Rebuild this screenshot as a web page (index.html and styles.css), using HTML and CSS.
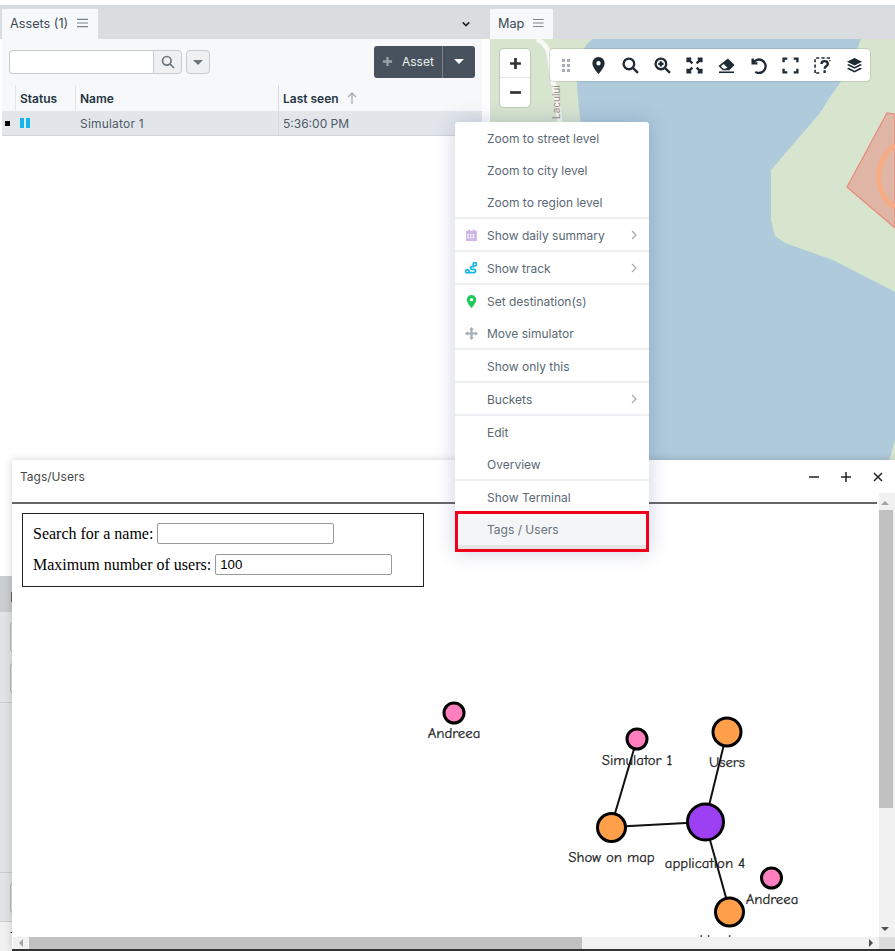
FILE: index.html
```html
<!DOCTYPE html>
<html>

<head>
    <title>Assets and map</title>
    <meta name="viewport" content="width=device-width, initial-scale=1.0">
    <link rel="stylesheet" href="styles.css">
</head>

<body>
    <div class="dock">
        <!-- assets panel -->
        <section class="panel assets">
            <div class="tabbar">
                <div class="tab">
                    <span>Assets (1)</span>
                    <svg class="burger" viewBox="0 0 12 10"><path d="M0 1h12M0 5h12M0 9h12" /></svg>
                </div>
                <svg class="tab-chevron" viewBox="0 0 10 6"><path d="M1 1l4 4 4-4" /></svg>
            </div>
            <div class="toolbar">
                <div class="search">
                    <input type="text">
                    <button class="search-btn">
                        <svg viewBox="0 0 14 14"><circle cx="5.8" cy="5.8" r="4.3" /><path d="M9 9l4 4" /></svg>
                    </button>
                </div>
                <button class="caret-btn"><span class="caret"></span></button>
                <div class="add-asset">
                    <div class="add-main">
                        <svg viewBox="0 0 12 12"><path d="M6 1v10M1 6h10" /></svg>
                        <span>Asset</span>
                    </div>
                    <div class="add-more"><span class="caret"></span></div>
                </div>
            </div>
            <div class="grid-head">
                <div class="col-mark"></div>
                <div class="col-status">Status</div>
                <div class="col-name">Name</div>
                <div class="col-seen">Last seen
                    <svg viewBox="0 0 10 12"><path d="M5 12V1M1 5l4-4 4 4" /></svg>
                </div>
            </div>
            <div class="grid-row">
                <div class="col-mark"><span class="bullet"></span></div>
                <div class="col-status"><span class="pause"></span><span class="pause"></span></div>
                <div class="col-name sim-name">Simulator 1</div>
                <div class="col-seen">5:36:00 PM</div>
            </div>
            <div class="assets-empty"></div>
            <div class="under under-head"><span class="under-mark"></span></div>
            <div class="under under-fields"><span></span><span></span></div>
            <div class="under under-body"></div>
            <div class="under under-fields under-low"><span></span></div>
            <div class="under under-foot">T</div>
        </section>

        <!-- map panel -->
        <section class="panel map">
            <div class="tabbar">
                <div class="tab">
                    <span>Map</span>
                    <svg class="burger" viewBox="0 0 12 10"><path d="M0 1h12M0 5h12M0 9h12" /></svg>
                </div>
            </div>
            <div class="map-view">
                <svg class="map-bg" viewBox="490 39 405 425" preserveAspectRatio="none">
                    <rect x="490" y="39" width="405" height="425" fill="#d7e5cf" />
                    <path d="M593 39H861L855 55L840 83L828 100L820 113L771 170V220L775 236L785 243L833 260L895 292V440L888 464H588C592 400 592 300 590 220C588 170 579 120 577 85C577 60 583 45 593 39Z" fill="#aecadb" />
                    <path d="M895 114L887 113L847 187L895 228Z" fill="#dfb6a6" stroke="#e8897a" stroke-width="1.2" />
                    <path d="M895 145C882 155 877 170 879 182C881 195 888 204 895 207" fill="none" stroke="#f6ab83" stroke-width="5" />
                    <path d="M537 39C546 44 549 50 550 60C552 80 558 100 560 123" fill="none" stroke="#f7f7f4" stroke-width="5" />
                    <text x="0" y="0" transform="translate(560 119) rotate(-90)" class="road">Lacului</text>
                </svg>

                <div class="zoom-ctl">
                    <button>
                        <svg viewBox="0 0 12 12"><path d="M6 1v10M1 6h10" /></svg>
                    </button>
                    <button>
                        <svg viewBox="0 0 12 12"><path d="M1 6h10" /></svg>
                    </button>
                </div>

                <div class="map-tools">
                    <svg class="tool handle" viewBox="0 0 8 13"><rect x="0" y="0" width="3" height="3" /><rect x="5" y="0" width="3" height="3" /><rect x="0" y="5" width="3" height="3" /><rect x="5" y="5" width="3" height="3" /><rect x="0" y="10" width="3" height="3" /><rect x="5" y="10" width="3" height="3" /></svg>
                    <svg class="tool solid" viewBox="0 0 14 18"><path fill-rule="evenodd" d="M7 0a6.5 6.5 0 0 1 6.5 6.5C13.5 11 7 18 7 18S.5 11 .5 6.5A6.5 6.5 0 0 1 7 0zm0 4.300a2.300 2.300 0 1 0 0 4.600 2.300 2.300 0 0 0 0-4.600z" /></svg>
                    <svg class="tool line" viewBox="0 0 16 16"><circle cx="6.5" cy="6.5" r="5" /><path d="M10.200 10.200L15 15" /></svg>
                    <svg class="tool line" viewBox="0 0 16 16"><circle cx="6.5" cy="6.5" r="5" /><path d="M10.200 10.200L15 15M6.5 4v5M4 6.5h5" /></svg>
                    <svg class="tool line" viewBox="0 0 16 16"><path d="M1.5 5V1.5H5M11 1.500h3.500V5M14.500 11v3.500H11M5 14.500H1.500V11M2 2l4 4M14 2l-4 4M14 14l-4-4M2 14l4-4" /></svg>
                    <svg class="tool solid" viewBox="0 0 18 16"><path d="M10.500.5l7 7L12 13H5L.5 8.500z" /><path class="erase-tip" d="M6 6.500l4 4L7.500 11.500H5.700L3 8.700z" /><path d="M1 14.300h16V16H1z" /></svg>
                    <svg class="tool line" viewBox="0 0 16 16"><path d="M2.500 1.500v4.500H7M2.800 5.800A6.300 6.300 0 1 1 5 14" /></svg>
                    <svg class="tool line" viewBox="0 0 16 16"><path d="M1.500 5V1.500H5M11 1.500h3.500V5M14.500 11v3.500H11M5 14.500H1.500V11" /></svg>
                    <svg class="tool dashed" viewBox="0 0 16 16"><path class="dash" d="M1 15V1h14v3M5 15H1" /><path d="M7 6.500c0-3.500 6-3.500 6 0 0 2-3 2-3 4.500M10 12.500v2.500" /></svg>
                    <svg class="tool solid" viewBox="0 0 18 18"><path d="M9 1l8 4-8 4-8-4z" /><path d="M1 8.500l2-1 6 3 6-3 2 1-8 4z" /><path d="M1 12.500l2-1 6 3 6-3 2 1-8 4z" /></svg>
                </div>
            </div>
        </section>
    </div>

    <!-- right click menu on the map -->
    <ul class="context-menu">
        <li class="item">Zoom to street level</li>
        <li class="item">Zoom to city level</li>
        <li class="item last">Zoom to region level</li>
        <li class="item last">
            <svg class="menu-icon" viewBox="0 0 12 12"><path fill="#cdb6e6" fill-rule="evenodd" d="M1 1.500h2V.5h1.500v1h3v-1H9v1h2V11H1zM2 4.500V6h1.500V4.500zm2.500 0V6H6V4.500zm2.500 0V6h1.500V4.500zM2 7v1.500h1.500V7zm2.500 0v1.500H6V7zm2.500 0v1.500h1.500V7z" /></svg>
            Show daily summary
            <svg class="sub" viewBox="0 0 6 10"><path d="M1 1l4 4-4 4" /></svg>
        </li>
        <li class="item last">
            <svg class="menu-icon track" viewBox="0 0 14 14"><circle cx="2.5" cy="10" r="1.800" /><circle cx="10.500" cy="2.500" r="1.800" /><path d="M4.500 11.500h5c2.500 0 2.500-3.500 0-3.500H7.500C5.500 8 5.500 5 7.500 5H10" /></svg>
            Show track
            <svg class="sub" viewBox="0 0 6 10"><path d="M1 1l4 4-4 4" /></svg>
        </li>
        <li class="item">
            <svg class="menu-icon" viewBox="0 0 12 14"><path fill="#1ec95b" fill-rule="evenodd" d="M6 0a5 5 0 0 1 5 5c0 3.500-5 9-5 9S1 8.500 1 5a5 5 0 0 1 5-5zm0 3.200a1.800 1.800 0 1 0 0 3.600 1.800 1.800 0 0 0 0-3.600z" /></svg>
            Set destination(s)
        </li>
        <li class="item last">
            <svg class="menu-icon move" viewBox="0 0 14 14"><path d="M7 0l2.500 3H8.200v2.800H11V4.500L14 7l-3 2.500V8.200H8.200V11h1.300L7 14l-2.500-3h1.300V8.200H3v1.300L0 7l3-2.500v1.300h2.800V3H4.500z" /></svg>
            Move simulator
        </li>
        <li class="item last">Show only this</li>
        <li class="item last">
            Buckets
            <svg class="sub" viewBox="0 0 6 10"><path d="M1 1l4 4-4 4" /></svg>
        </li>
        <li class="item">Edit</li>
        <li class="item last">Overview</li>
        <li class="item last">Show Terminal</li>
        <li class="item active">Tags / Users</li>
    </ul>

    <!-- tags / users popup -->
    <div class="popup">
        <div class="popup-head">
            <span class="popup-title">Tags/Users</span>
            <div class="popup-actions">
                <svg viewBox="0 0 10 10"><path d="M0 5h10" /></svg>
                <svg viewBox="0 0 10 10"><path d="M5 0v10M0 5h10" /></svg>
                <svg viewBox="0 0 10 10"><path d="M1 1l8 8M9 1l-8 8" /></svg>
            </div>
        </div>
        <div class="popup-body">
            <div class="filter-box">
                <div class="filter-row">
                    <label for="nameSearch">Search for a name:</label>
                    <input type="text" id="nameSearch">
                </div>
                <div class="filter-row">
                    <label for="maxUsers">Maximum number of users:</label>
                    <input type="text" id="maxUsers" value="100">
                </div>
            </div>

            <svg class="graph" viewBox="13 504 866 433">
                <g class="links">
                    <line x1="637" y1="739" x2="611" y2="827" />
                    <line x1="611" y1="827" x2="705" y2="822" />
                    <line x1="727" y1="732" x2="705" y2="822" />
                    <line x1="705" y1="822" x2="730" y2="912" />
                </g>
                <circle class="node tag" cx="454" cy="713" r="10" />
                <circle class="node tag" cx="637" cy="739" r="10" />
                <circle class="node group" cx="727" cy="732" r="14" />
                <circle class="node group" cx="611.5" cy="827.5" r="14" />
                <circle class="node app" cx="705.5" cy="822" r="18" />
                <circle class="node tag" cx="771.5" cy="878" r="10" />
                <circle class="node group" cx="729.5" cy="912" r="14" />
                <text x="454" y="738">Andreea</text>
                <text x="637" y="765">Simulator 1</text>
                <text x="727" y="767">Users</text>
                <text x="611.5" y="862">Show on map</text>
                <text x="705" y="868">application 4</text>
                <text x="772" y="904">Andreea</text>
                <text x="730" y="945">Hardware</text>
            </svg>

            <div class="hscroll">
                <span class="arrow-left"></span>
                <div class="hthumb"></div>
                <span class="arrow-right"></span>
                <div class="scroll-corner"></div>
            </div>
        </div>
        <div class="vscroll">
            <span class="arrow-up"></span>
            <div class="vthumb"></div>
            <span class="arrow-down"></span>
        </div>
    </div>
</body>

</html>
```
FILE: styles.css
```css
* {
    box-sizing: border-box;
    margin: 0;
    padding: 0;
}

body {
    width: 895px;
    height: 951px;
    overflow: hidden;
    position: relative;
    background: white;
    font-family: Inter, "Liberation Sans", sans-serif;
    font-size: 12px;
    color: #44525f;
}

.dock {
    display: flex;
    height: 951px;
    padding-top: 5px;
}

.panel {
    display: flex;
    flex-direction: column;
}

.assets {
    width: 490px;
    padding-left: 2px;
}

.map {
    flex: 1;
}

.tabbar {
    height: 34px;
    background: #d9dde0;
    display: flex;
    align-items: flex-start;
    padding-top: 4px;
    flex-shrink: 0;
}

.assets .tabbar {
    margin-left: -2px;
    padding-left: 2px;
}

.tab {
    height: 30px;
    background: #f7f8f9;
    display: flex;
    align-items: center;
    gap: 9px;
    padding: 0 9px 2px 8px;
    color: #3d4a57;
    font-size: 12.7px;
}

.assets .tab {
    width: 96px;
}

.map .tab {
    width: 63px;
}

.burger {
    width: 11px;
    height: 10px;
    fill: none;
    stroke: #7b858e;
    stroke-width: 1.3;
}

.tab-chevron {
    width: 8px;
    height: 6px;
    margin: 12px 0 0 auto;
    position: relative;
    right: 20px;
    fill: none;
    stroke: #222;
    stroke-width: 2;
}

/* toolbar above the grid */
.toolbar {
    height: 46px;
    width: 480px;
    background: #f7f8f9;
    display: flex;
    align-items: center;
    padding: 0 0 0 7px;
    flex-shrink: 0;
}

.search {
    display: flex;
    width: 173px;
    height: 24px;
}

.search input {
    width: 144px;
    border: 1px solid #c8cbce;
    border-right: none;
    border-radius: 4px 0 0 4px;
    background: white;
}

.search-btn {
    flex: 1;
    background: #eef0f1;
    border: 1px solid #c8cbce;
    border-radius: 0 4px 4px 0;
    display: flex;
    align-items: center;
    justify-content: center;
}

.search-btn svg {
    width: 14px;
    height: 14px;
    fill: none;
    stroke: #6d757c;
    stroke-width: 1.7;
}

.caret-btn {
    width: 24px;
    height: 24px;
    margin-left: 4px;
    background: #eef0f1;
    border: 1px solid #c8cbce;
    border-radius: 4px;
    display: flex;
    align-items: center;
    justify-content: center;
}

.caret {
    width: 0;
    height: 0;
    border-left: 5px solid transparent;
    border-right: 5px solid transparent;
    border-top: 5px solid #6d757c;
}

.add-asset {
    margin-left: 164px;
    width: 101px;
    height: 32px;
    display: flex;
    background: #47525e;
    border-radius: 3px;
    color: #eceef0;
    margin-top: -1px;
}

.add-main {
    width: 69px;
    display: flex;
    align-items: center;
    gap: 9px;
    padding-left: 8px;
    border-right: 1px solid #7a838c;
}

.add-main svg {
    width: 11px;
    height: 11px;
    fill: none;
    stroke: #9aa1a8;
    stroke-width: 2.5;
}

.add-more {
    flex: 1;
    display: flex;
    align-items: center;
    justify-content: center;
}

.add-more .caret {
    border-top-color: white;
}

/* grid */
.grid-head,
.grid-row {
    display: flex;
    width: 480px;
    flex-shrink: 0;
}

.grid-head {
    height: 26px;
    background: #f7f8f9;
    font-weight: 600;
    color: #243443;
}

.grid-row {
    height: 25px;
    background: #e2e6eb;
    border-bottom: 1px solid #cfd4d9;
    color: #4d5a66;
}

.col-mark {
    width: 14px;
    display: flex;
    align-items: center;
    padding-left: 3px;
    border-right: 1px solid #e3e5e7;
}

.col-status {
    width: 60px;
    padding-left: 4px;
    display: flex;
    align-items: center;
    gap: 2px;
    border-right: 1px solid #e3e5e7;
}

.col-name {
    width: 203px;
    padding-left: 4px;
    display: flex;
    align-items: center;
    border-right: 1px solid #d8dbde;
}

.sim-name {
    letter-spacing: 0.2px;
}

.col-seen {
    flex: 1;
    padding-left: 4px;
    display: flex;
    align-items: center;
    gap: 8px;
}

.col-seen svg {
    width: 10px;
    height: 12px;
    fill: none;
    stroke: #a9afb5;
    stroke-width: 1.3;
}

.bullet {
    width: 5px;
    height: 5px;
    background: black;
}

.pause {
    width: 4px;
    height: 10px;
    background: #12b5e5;
}

.assets-empty {
    height: 440px;
    width: 480px;
    background: white;
    flex-shrink: 0;
}

/* bits of another panel, only the left edge shows past the popup */
.under {
    margin-left: -2px;
    background: #e1e3e5;
    flex-shrink: 0;
}

.under-head {
    height: 36px;
    background: #c9cdd0;
    padding: 16px 0 0 11px;
}

.under-mark {
    display: block;
    width: 2px;
    height: 10px;
    background: #7a5a4a;
}

.under-fields {
    height: 91px;
    display: flex;
    flex-direction: column;
    gap: 11px;
    padding: 10px 0 0 10px;
    border-bottom: 1px solid #c9cdd0;
}

.under-fields span {
    width: 6px;
    height: 30px;
    border: 1px solid #b4bac1;
    border-radius: 3px;
}

.under-body {
    height: 170px;
    border-bottom: 1px solid #c9cdd0;
}

.under-low {
    height: 49px;
}

.under-foot {
    height: 29px;
    background: #f1f1f1;
    padding: 7px 0 0 10px;
    color: #333;
}

/* map */
.map-view {
    height: 425px;
    position: relative;
    overflow: hidden;
}

.map-bg {
    display: block;
    width: 405px;
    height: 425px;
}

.road {
    font-size: 10px;
    fill: #9a8f88;
}

.zoom-ctl {
    position: absolute;
    left: 10px;
    top: 10px;
    width: 30px;
    display: flex;
    flex-direction: column;
    background: white;
    border-radius: 4px;
    box-shadow: 0 0 0 1px rgba(90, 100, 90, 0.2);
}

.zoom-ctl button {
    height: 29px;
    background: none;
    border: none;
    display: flex;
    align-items: center;
    justify-content: center;
}

.zoom-ctl button:first-child {
    border-bottom: 1px solid #e4e4e4;
}

.zoom-ctl svg {
    width: 13px;
    height: 13px;
    fill: none;
    stroke: #333;
    stroke-width: 2.5;
}

.map-tools {
    position: absolute;
    left: 60px;
    top: 10px;
    width: 320px;
    height: 32px;
    background: white;
    border-radius: 4px;
    box-shadow: 0 0 0 1px rgba(90, 100, 90, 0.18);
    display: flex;
    align-items: center;
    gap: 15px;
    padding-left: 11px;
}

.tool {
    width: 17px;
    height: 17px;
    flex-shrink: 0;
}

.tool.handle {
    width: 10px;
    height: 13px;
    margin-right: 3.5px;
    fill: #a8adb8;
}

.tool.solid {
    fill: #1f2a35;
}

.tool .erase-tip {
    fill: white;
}

.tool.line,
.tool.dashed {
    fill: none;
    stroke: #1f2a35;
    stroke-width: 2.2;
}

.tool .dash {
    stroke-width: 1.5;
    stroke-dasharray: 3 2;
}

/* context menu */
.context-menu {
    position: absolute;
    left: 455px;
    top: 122px;
    width: 194px;
    background: white;
    border-radius: 3px;
    box-shadow: 0 0 20px rgba(60, 70, 140, 0.25);
    list-style: none;
    z-index: 3;
}

.item {
    position: relative;
    height: 32px;
    padding-left: 32px;
    display: flex;
    align-items: center;
    color: #5b6873;
    font-size: 12px;
}

.item.last {
    height: 33px;
    padding-top: 1px;
    border-bottom: 2px solid #eff0f4;
}

.item.active {
    height: 41px;
    margin-top: -3px;
    background: #f4f5f7;
    color: #67727c;
    border: 3px solid #f0001c;
    padding: 0 0 4px 29px;
    box-shadow: inset 0 -4px 0 #e4e4e4;
}

.menu-icon {
    position: absolute;
    left: 10px;
    width: 13px;
    height: 13px;
}

.menu-icon.track {
    fill: none;
    stroke: #12b5e5;
    stroke-width: 1.8;
}

.menu-icon.move {
    fill: #a5adb8;
}

.sub {
    position: absolute;
    right: 12px;
    width: 6px;
    height: 10px;
    fill: none;
    stroke: #a3a9af;
    stroke-width: 1.2;
}

/* popup */
.popup {
    position: absolute;
    left: 12px;
    top: 460px;
    right: 0;
    bottom: 0;
    background: white;
    box-shadow: 0 0 8px rgba(0, 0, 0, 0.18);
    display: flex;
    flex-direction: column;
    border-bottom: 2px solid #333;
    z-index: 2;
}

.popup-head {
    height: 44px;
    padding: 9px 0 0 8px;
    display: flex;
    justify-content: space-between;
    align-items: flex-start;
    border-bottom: 2px solid #666;
    color: #4a4a4a;
    flex-shrink: 0;
}

.popup-title {
    font-size: 12px;
}

.popup-actions {
    display: flex;
    gap: 22px;
    padding: 3px 12px 0 0;
}

.popup-actions svg {
    width: 10px;
    height: 10px;
    fill: none;
    stroke: #222;
    stroke-width: 1.5;
}

.popup-body {
    flex: 1;
    position: relative;
    overflow: hidden;
}

.filter-box {
    position: relative;
    margin: 9px 0 0 10px;
    width: 402px;
    height: 74px;
    border: 1px solid #222;
    padding: 9px 0 0 10px;
    font-family: "Liberation Serif", serif;
    font-size: 16px;
    color: black;
    display: flex;
    flex-direction: column;
    gap: 10px;
    z-index: 1;
}

.filter-row {
    display: flex;
    align-items: center;
    gap: 4px;
    height: 21px;
}

.filter-row input {
    width: 177px;
    height: 21px;
    border: 1px solid #9a9a9a;
    border-radius: 2px;
    padding: 0 4px;
    font-family: "Liberation Sans", sans-serif;
    font-size: 13.3px;
    background: white;
}

.graph {
    position: absolute;
    left: 1px;
    top: 0;
    width: 866px;
    height: 433px;
}

.links line {
    stroke: #111;
    stroke-width: 2;
}

.node {
    stroke: black;
    stroke-width: 3;
}

.node.tag {
    fill: #ff7fbf;
}

.node.group {
    fill: #ff9f4a;
}

.node.app {
    fill: #9d3ff2;
}

.graph text {
    font-family: "Comic Sans MS", "Comic Neue", cursive;
    font-size: 14.8px;
    text-anchor: middle;
    fill: #222;
    stroke: #222;
    stroke-width: 0.25px;
}

/* scrollbars */
.vscroll {
    position: absolute;
    right: 0;
    top: 33px;
    width: 18px;
    height: 444px;
    background: #f1f1f1;
    border-left: 2px solid white;
    display: flex;
    flex-direction: column;
    z-index: 1;
}

.vthumb {
    width: 14px;
    height: 298px;
    margin-top: 17px;
    background: #c1c1c1;
}

.arrow-up,
.arrow-down,
.arrow-left,
.arrow-right {
    width: 0;
    height: 0;
    position: absolute;
    border: 4px solid transparent;
}

.arrow-up {
    top: 4px;
    left: 2px;
    border-bottom-color: #a3a3a3;
}

.arrow-down {
    bottom: 2px;
    left: 2px;
    border-top-color: #505050;
}

.hscroll {
    position: absolute;
    left: 1px;
    bottom: 0;
    width: 882px;
    height: 12px;
    background: #f1f1f1;
    display: flex;
    align-items: center;
}

.hthumb {
    margin-left: 16px;
    width: 553px;
    height: 12px;
    background: #c1c1c1;
}

.scroll-corner {
    position: absolute;
    right: 0;
    top: 0;
    width: 16px;
    height: 12px;
    background: #dcdcdc;
}

.arrow-left {
    left: 2px;
    border-right-color: #a3a3a3;
}

.arrow-right {
    right: 18px;
    border-left-color: #505050;
}
```
